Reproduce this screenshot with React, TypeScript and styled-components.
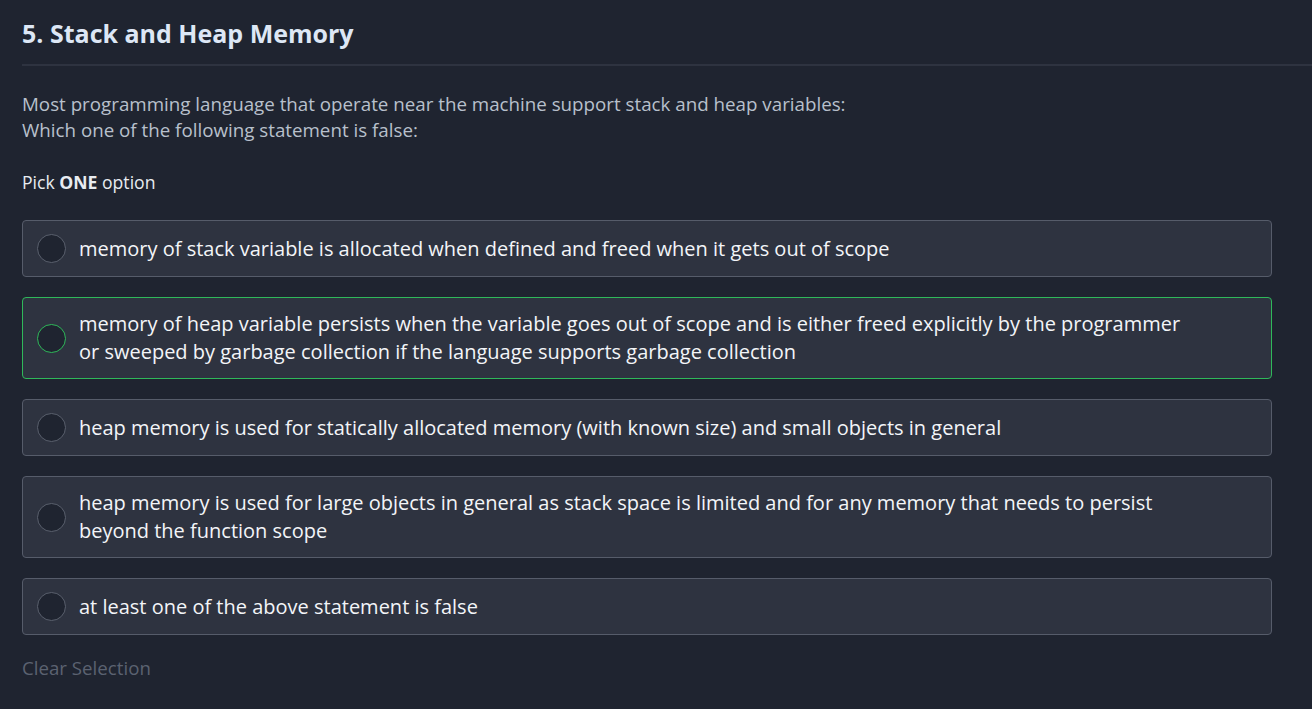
import React from "react";
import styled, { createGlobalStyle } from "styled-components";

const Global = createGlobalStyle`
  html, body { margin: 0; padding: 0; background: #1f2430; }
  body { font-family: "Open Sans", "Noto Sans", sans-serif; color: #f3f5f8; }
`;

const Page = styled.div`
  padding: 15px 0 0 22px;
  min-height: 709px;
  box-sizing: border-box;
`;

const Title = styled.h1`
  margin: 0;
  font-size: 25px;
  font-weight: 700;
  line-height: 36px;
  color: #dde7f5;
`;

const Divider = styled.hr`
  margin: 13px 0 0;
  border: none;
  height: 2px;
  background: #2e3340;
`;

const Prompt = styled.p`
  margin: 25px 0 0;
  font-size: 18.75px;
  line-height: 26px;
  color: #b8c0cc;
  white-space: pre-line;
`;

const Pick = styled.div`
  margin-top: 27px;
  font-size: 17.6px;
  line-height: 24px;
  color: #e8ecf1;
  b { font-weight: 700; }
`;

const Options = styled.div`
  margin-top: 26px;
  width: 1250px;
  display: flex;
  flex-direction: column;
  gap: 20px;
`;

const Option = styled.label<{ $active?: boolean }>`
  display: flex;
  align-items: center;
  gap: 13px;
  box-sizing: border-box;
  min-height: 57px;
  padding: 12px 16px 12px 14px;
  background: #2e3340;
  border: 1px solid ${(p) => (p.$active ? "#2fb85a" : "#565c6a")};
  border-radius: 4px;
  cursor: pointer;
`;

const Radio = styled.span<{ $active?: boolean }>`
  flex: none;
  width: 29px;
  height: 29px;
  box-sizing: border-box;
  border-radius: 50%;
  background: #1f2430;
  border: 1px solid ${(p) => (p.$active ? "#2fb85a" : "#5a606d")};
`;

const OptionText = styled.span`
  font-size: 20px;
  line-height: 28px;
  color: #f3f5f8;
  white-space: pre-line;
`;

const Clear = styled.div`
  margin-top: 20px;
  font-size: 18.7px;
  line-height: 26px;
  color: #5b6270;
`;

const options = [
  "memory of stack variable is allocated when defined and freed when it gets out of scope",
  "memory of heap variable persists when the variable goes out of scope and is either freed explicitly by the programmer\nor sweeped by garbage collection if the language supports garbage collection",
  "heap memory is used for statically allocated memory (with known size) and small objects in general",
  "heap memory is used for large objects in general as stack space is limited and for any memory that needs to persist\nbeyond the function scope",
  "at least one of the above statement is false",
];

export default function App() {
  return (
    <>
      <Global />
      <Page>
        <Title>5. Stack and Heap Memory</Title>
        <Divider />
        <Prompt>
          {"Most programming language that operate near the machine support stack and heap variables:\nWhich one of the following statement is false:"}
        </Prompt>
        <Pick>
          Pick <b>ONE</b> option
        </Pick>
        <Options>
          {options.map((t, i) => (
            <Option key={i} $active={i === 1}>
              <Radio $active={i === 1} />
              <OptionText>{t}</OptionText>
            </Option>
          ))}
        </Options>
        <Clear>Clear Selection</Clear>
      </Page>
    </>
  );
}
